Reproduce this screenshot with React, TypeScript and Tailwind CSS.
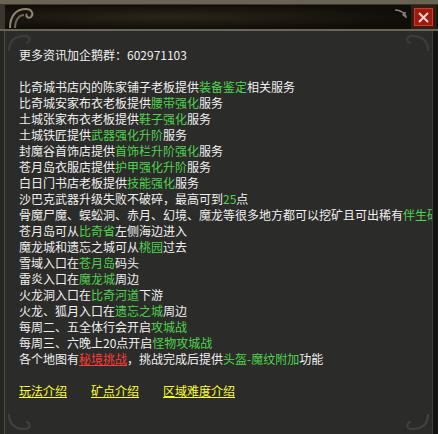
import React from "react";

const G = ({ children }: { children: React.ReactNode }) => (
  <span className="text-[#4fd34f]">{children}</span>
);

type Line = React.ReactNode;

const lines: Line[] = [
  <>比奇城书店内的陈家铺子老板提供<G>装备鉴定</G>相关服务</>,
  <>比奇城安家布衣老板提供<G>腰带强化</G>服务</>,
  <>土城张家布衣老板提供<G>鞋子强化</G>服务</>,
  <>土城铁匠提供<G>武器强化升阶</G>服务</>,
  <>封魔谷首饰店提供<G>首饰栏升阶强化</G>服务</>,
  <>苍月岛衣服店提供<G>护甲强化升阶</G>服务</>,
  <>白日门书店老板提供<G>技能强化</G>服务</>,
  <>沙巴克武器升级失败不破碎，最高可到<G>25</G>点</>,
  <>骨魔尸魔、蜈蚣洞、赤月、幻境、魔龙等很多地方都可以挖矿且可出稀有<G>伴生矿</G></>,
  <>苍月岛可从<G>比奇省</G>左侧海边进入</>,
  <>魔龙城和遗忘之城可从<G>桃园</G>过去</>,
  <>雪域入口在<G>苍月岛</G>码头</>,
  <>雷炎入口在<G>魔龙城</G>周边</>,
  <>火龙洞入口在<G>比奇河道</G>下游</>,
  <>火龙、狐月入口在<G>遗忘之城</G>周边</>,
  <>每周二、五全体行会开启<G>攻城战</G></>,
  <>每周三、六晚上20点开启<G>怪物攻城战</G></>,
  <>各个地图有<span className="text-[#ff3a3a] underline">秘境挑战</span>，挑战完成后提供<G>头盔-魔纹附加</G>功能</>,
];

export default function App() {
  return (
    <div className="w-[438px] h-[434px] bg-[#1a1a18] flex flex-col overflow-hidden font-['Noto_Sans_CJK_SC','Noto_Sans',sans-serif]">
      {/* top frame */}
      <div className="h-[5px] bg-[#6a6252] border-b border-[#3a342a]" />
      <div className="h-[24px] flex">
        <div className="w-[5px] bg-[#3a352d]" />
        <div className="flex-1 bg-[radial-gradient(ellipse_at_40%_50%,#2b2418_0%,#110e0a_70%)] relative">
          {/* corner swirl */}
          <svg className="absolute left-[2px] top-[1px]" width="30" height="23" viewBox="0 0 30 23">
            <path d="M3 22 C3 10 9 3 19 3 C25 3 27 8 24 11 C21 13 18 10 20 8" fill="none" stroke="#8c8474" strokeWidth="2" />
            <path d="M8 22 C8 14 12 9 17 9" fill="none" stroke="#6e685c" strokeWidth="2" />
          </svg>
          <svg className="absolute right-[3px] top-[3px]" width="14" height="12" viewBox="0 0 14 12">
            <path d="M1 2 C6 2 12 5 12 10 M12 5 C9 4 8 8 11 8" fill="none" stroke="#8a8272" strokeWidth="1.5" />
          </svg>
        </div>
        <div className="w-[25px] bg-[#2a2118] flex items-center justify-center">
          <div className="w-[21px] h-[20px] bg-[#9a1c10] border border-[#5a0e08] shadow-[inset_0_0_0_1px_#c8402a] flex items-center justify-center">
            <svg width="13" height="13" viewBox="0 0 13 13">
              <path d="M2 2 L11 11 M11 2 L2 11" stroke="#ffd0c8" strokeWidth="2" />
            </svg>
          </div>
        </div>
        <div className="w-[2px] bg-[#1a1612]" />
      </div>
      <div className="h-[2px] bg-[#6a6558]" />
      {/* body */}
      <div className="flex-1 flex min-h-0">
        <div className="w-[5px] bg-[#26251f] border-r border-[#4a4842]" />
        <div className="flex-1 bg-[#2b2b29] overflow-hidden relative pl-[14px] pt-[16px] text-[12px] leading-[16px] text-[#f0f0f0] whitespace-nowrap">
          <svg className="absolute left-[2px] top-[2px] opacity-40" width="28" height="20" viewBox="0 0 28 20">
            <path d="M2 18 C2 8 8 3 18 3 C24 3 24 10 19 10" fill="none" stroke="#5a5a56" strokeWidth="2" />
          </svg>
          <svg className="absolute right-[2px] top-[2px] opacity-40" width="28" height="20" viewBox="0 0 28 20">
            <path d="M26 18 C26 8 20 3 10 3 C4 3 4 10 9 10" fill="none" stroke="#5a5a56" strokeWidth="2" />
          </svg>
          <svg className="absolute right-[2px] bottom-[2px] opacity-50" width="28" height="20" viewBox="0 0 28 20">
            <path d="M26 2 C26 12 20 17 10 17 C4 17 4 10 9 10" fill="none" stroke="#5a5a56" strokeWidth="2" />
          </svg>
          <svg className="absolute left-[2px] bottom-[2px] opacity-50" width="28" height="20" viewBox="0 0 28 20">
            <path d="M2 2 C2 12 8 17 18 17 C24 17 24 10 19 10" fill="none" stroke="#5a5a56" strokeWidth="2" />
          </svg>
          <div>更多资讯加企鹅群：602971103</div>
          <div className="h-[16px]" />
          {lines.map((l, i) => (
            <div key={i}>{l}</div>
          ))}
          <div className="h-[16px]" />
          <div className="flex gap-[24px] text-[#ffff30] underline">
            <span>玩法介绍</span>
            <span>矿点介绍</span>
            <span>区域难度介绍</span>
          </div>
        </div>
        <div className="w-[6px] bg-[#141412] border-l border-[#3a3a36]" />
      </div>
    </div>
  );
}
